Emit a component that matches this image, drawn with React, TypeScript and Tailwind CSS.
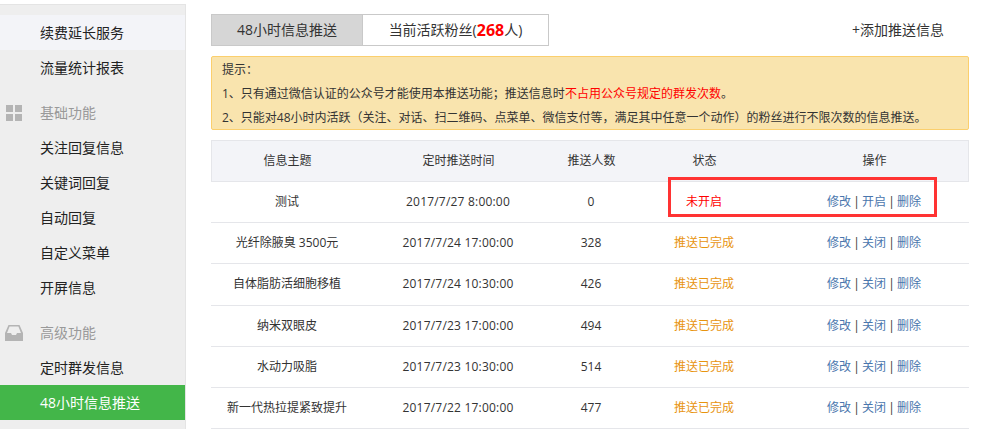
const font = { fontFamily: '"Open Sans", "Noto Sans CJK SC", sans-serif' };

const groups = [
  { items: ["续费延长服务", "流量统计报表"] },
  { title: "基础功能", icon: "grid", items: ["关注回复信息", "关键词回复", "自动回复", "自定义菜单", "开屏信息"] },
  { title: "高级功能", icon: "inbox", items: ["定时群发信息", "48小时信息推送"] },
];

const rows = [
  { name: "测试", time: "2017/7/27 8:00:00", count: 0, off: true },
  { name: "光纤除腋臭 3500元", time: "2017/7/24 17:00:00", count: 328 },
  { name: "自体脂肪活细胞移植", time: "2017/7/24 10:30:00", count: 426 },
  { name: "纳米双眼皮", time: "2017/7/23 17:00:00", count: 494 },
  { name: "水动力吸脂", time: "2017/7/23 10:30:00", count: 514 },
  { name: "新一代热拉提紧致提升", time: "2017/7/22 17:00:00", count: 477 },
];

const columns = "grid grid-cols-[152px_190px_76px_150px_190px] items-center text-center";

function GridIcon() {
  return (
    <svg width="16" height="16" viewBox="0 0 16 16" fill="#b4b4b4">
      <rect x="0" y="0" width="7" height="7" />
      <rect x="9" y="0" width="7" height="7" />
      <rect x="0" y="9" width="7" height="7" />
      <rect x="9" y="9" width="7" height="7" />
    </svg>
  );
}

function InboxIcon() {
  return (
    <svg width="18" height="16" viewBox="0 0 18 16" fill="#b4b4b4">
      <path d="M3.5 0h11L18 8v8H0V8L3.5 0zM4.6 1.600 2 8h4l1 2h4l1-2h4l-2.600-6.400H4.600z" fillRule="evenodd" />
    </svg>
  );
}

function Sidebar() {
  return (
    <aside className="mt-1 h-[425px] w-[186px] shrink-0 border-t border-r border-[#e4e4e4] bg-[#eeeeee] pt-[10px] text-sm text-[#222]">
      {groups.map((group) => (
        <div key={group.items[0]}>
          {group.title ? (
            <div className="relative mt-[10px] flex h-[35px] items-center pl-10 text-[#999]">
              <span className="absolute left-[5px] top-[10px] flex w-[18px] justify-center">
                {group.icon === "grid" ? <GridIcon /> : <InboxIcon />}
              </span>
              {group.title}
            </div>
          ) : null}
          {group.items.map((item) => (
            <div
              key={item}
              className={
                "flex h-[35px] items-center pl-10 " +
                (item === "续费延长服务" ? "bg-[#f3f4f8] " : "") +
                (item === "48小时信息推送" ? "bg-[#43b649] text-white" : "")
              }
            >
              {item}
            </div>
          ))}
        </div>
      ))}
    </aside>
  );
}

function Actions({ off }: { off?: boolean }) {
  return (
    <div className="flex justify-center gap-1 text-[#4a76ad]">
      <span>修改</span>
      <span className="flex w-[3px] justify-center text-[#333]">|</span>
      <span>{off ? "开启" : "关闭"}</span>
      <span className="flex w-[3px] justify-center text-[#333]">|</span>
      <span>删除</span>
    </div>
  );
}

export default function App() {
  return (
    <div className="relative flex h-[429px] w-[985px] overflow-hidden bg-white text-[#333]" style={font}>
      <Sidebar />

      <main className="ml-[25px] w-[758px] pt-[14px]">
        <div className="flex items-center justify-between">
          <div className="flex h-8 text-sm">
            <div className="flex w-[152px] items-center justify-center border border-[#c9c9c9] bg-[#d6d6d6]">48小时信息推送</div>
            <div className="flex w-[186px] items-center justify-center border border-l-0 border-[#c9c9c9]">
              当前活跃粉丝(<b className="text-base text-[#f00]">268</b>人)
            </div>
          </div>
          <div className="mr-[25px] text-sm">+添加推送信息</div>
        </div>

        <div className="mt-[10px] h-[74px] rounded-[2px] border border-[#fbcf6d] bg-[#f9e4ae] px-[10px] pt-px text-xs leading-6">
          <p>提示：</p>
          <p>
            1、只有通过微信认证的公众号才能使用本推送功能；推送信息时<span className="text-[#f00]">不占用公众号规定的群发次数</span>。
          </p>
          <p>2、只能对48小时内活跃（关注、对话、扫二维码、点菜单、微信支付等，满足其中任意一个动作）的粉丝进行不限次数的信息推送。</p>
        </div>

        <div className="mt-[10px] text-xs">
          <div className={columns + " h-[42px] border border-[#e5e6ea] bg-[#f3f4f8] [&>*]:-ml-px"}>
            <div>信息主题</div>
            <div>定时推送时间</div>
            <div>推送人数</div>
            <div>状态</div>
            <div>操作</div>
          </div>
          {rows.map((row) => (
            <div key={row.time} className={columns + " h-[41.2px] border-b border-[#e5e6ea]"}>
              <div>{row.name}</div>
              <div className="tracking-[0.2px]">{row.time}</div>
              <div>{row.count}</div>
              <div className={row.off ? "text-[#f00]" : "text-[#e8940f]"}>{row.off ? "未开启" : "推送已完成"}</div>
              <Actions off={row.off} />
            </div>
          ))}
        </div>
      </main>

      <div className="absolute left-[668px] top-[177px] h-[40px] w-[269px] border-[3px] border-[#f33]" />
    </div>
  );
}
